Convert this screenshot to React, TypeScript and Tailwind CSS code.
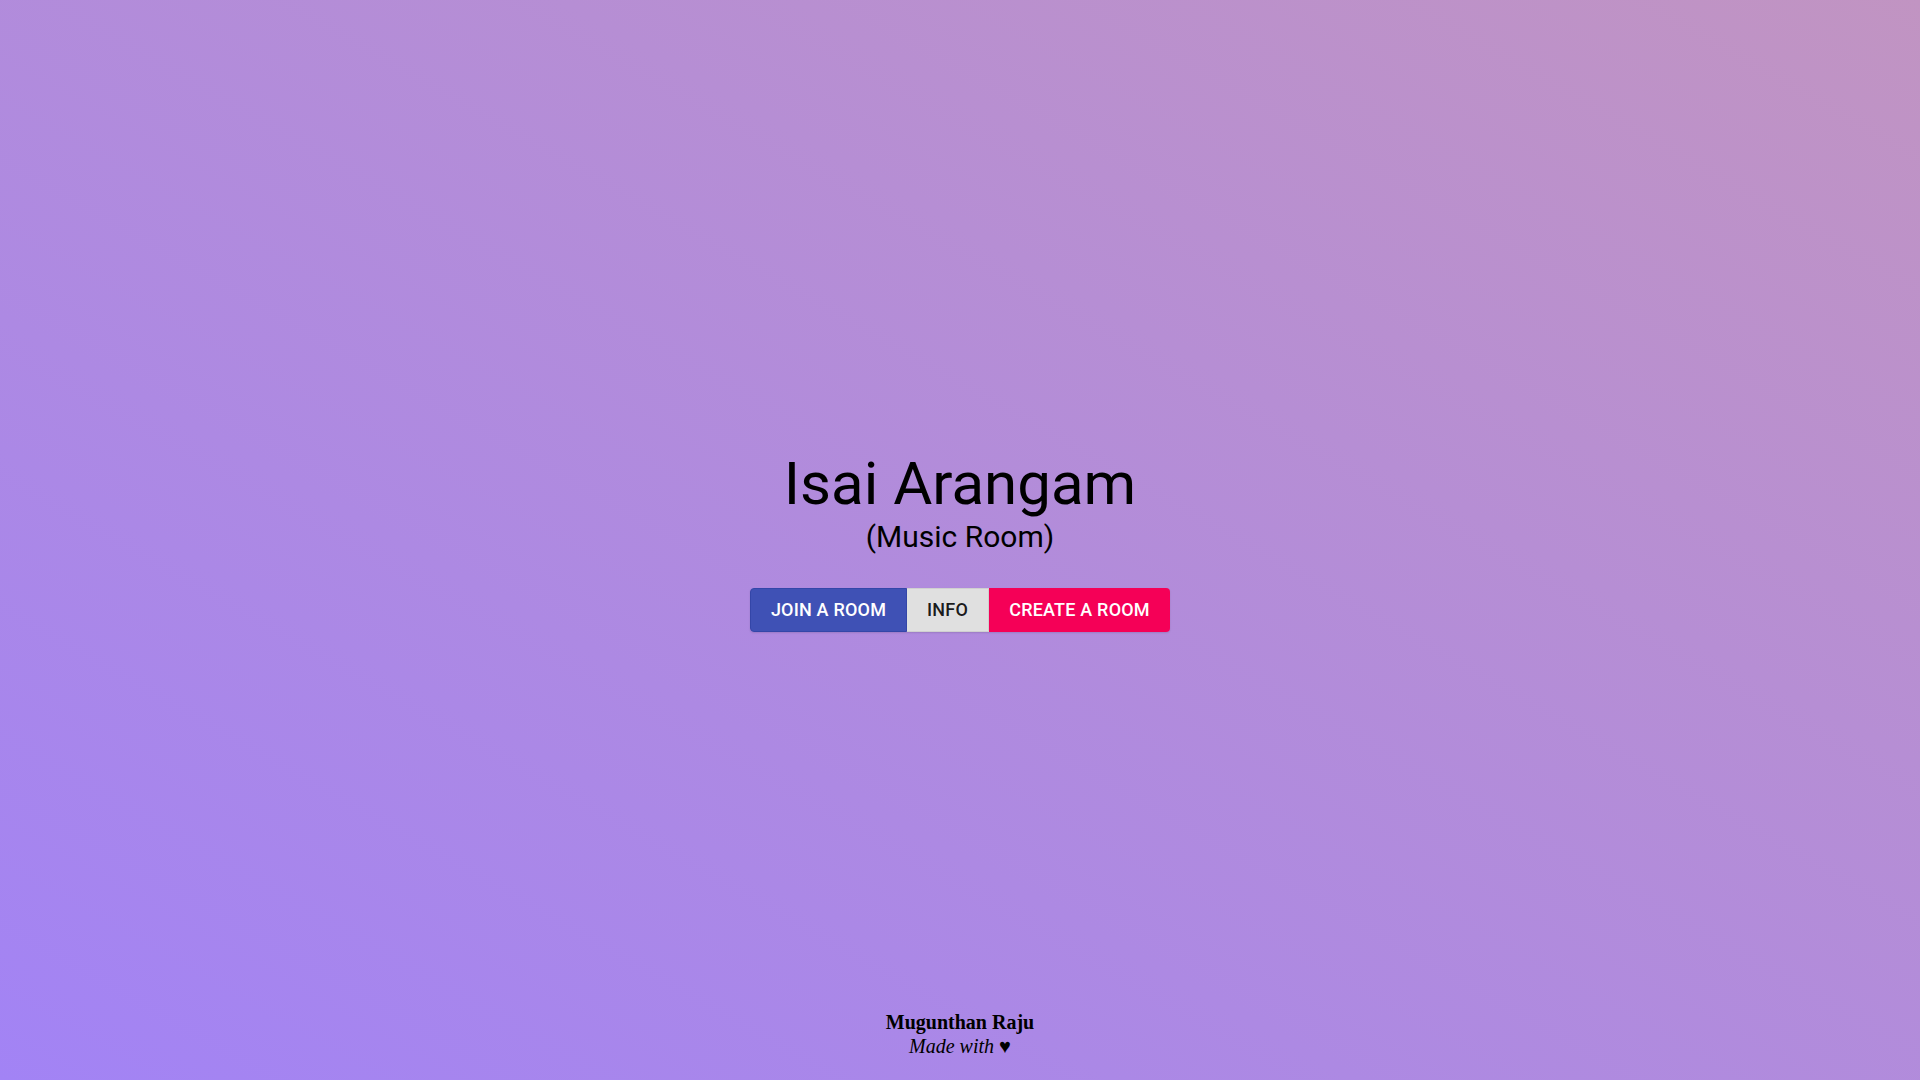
export default function App() {
  return (
    <div className="grid h-screen w-full grid-rows-[1fr_auto_1fr] bg-[linear-gradient(to_top_right,#a283f5,#c194c2)] font-['Roboto',sans-serif]">
      <div />
      <main className="flex flex-col items-center">
        <h1 className="text-[60px] leading-[72px] font-normal text-black">Isai Arangam</h1>
        <h2 className="text-[30px] leading-[33.6px] font-normal text-black">(Music Room)</h2>
        <div className="mt-[34px] flex h-[44px] rounded-[4px] shadow-[0_1px_2px_0_rgba(0,0,0,0.12)]">
          <button className="flex w-[157px] items-center justify-center rounded-l-[4px] border border-[#3446a8] bg-[#3f51b5] text-[18px] font-medium tracking-[0.2px] text-white">
            JOIN A ROOM
          </button>
          <button className="flex w-[82px] items-center justify-center border-y border-r border-[#d0d0d0] bg-[#e0e0e0] text-[18px] font-medium tracking-[0.2px] text-black/90">
            INFO
          </button>
          <button className="flex w-[181px] items-center justify-center rounded-r-[4px] bg-[#f50057] text-[18px] font-medium tracking-[0.2px] text-white">
            CREATE A ROOM
          </button>
        </div>
      </main>
      <footer className="flex flex-col items-center justify-end pb-[22px] font-['Liberation_Serif',serif] text-[20px] leading-[24px] text-black">
        <p className="font-bold">Mugunthan Raju</p>
        <p className="italic">Made with ♥</p>
      </footer>
    </div>
  );
}
